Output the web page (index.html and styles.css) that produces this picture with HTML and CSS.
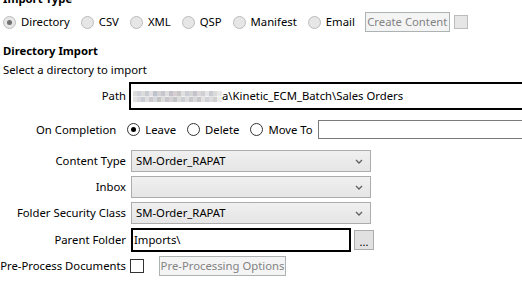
FILE: index.html
```html
<!DOCTYPE html>
<html>
<head>
<meta charset="utf-8">
<link rel="stylesheet" href="styles.css">
</head>
<body>
<div class="page">
  <div class="heading heading-top">Import Type</div>
  <div class="type-row">
    <span class="opt"><span class="radio radio-disabled checked"></span>Directory</span>
    <span class="opt"><span class="radio radio-disabled"></span>CSV</span>
    <span class="opt"><span class="radio radio-disabled"></span>XML</span>
    <span class="opt"><span class="radio radio-disabled"></span>QSP</span>
    <span class="opt"><span class="radio radio-disabled"></span>Manifest</span>
    <span class="opt"><span class="radio radio-disabled"></span>Email</span>
    <span class="btn btn-disabled create">Create Content</span>
    <span class="check check-disabled"></span>
  </div>
  <div class="heading section">Directory Import</div>
  <div class="hint">Select a directory to import</div>

  <div class="field path-row">
    <span class="label">Path</span>
    <div class="textbox path-box"><span class="blur"></span>a\Kinetic_ECM_Batch\Sales Orders</div>
  </div>

  <div class="completion-row">
    <span class="completion-label">On Completion</span>
    <span class="opt"><span class="radio checked"></span>Leave</span>
    <span class="opt"><span class="radio"></span>Delete</span>
    <span class="opt opt-last"><span class="radio"></span>Move To</span>
    <div class="textbox move-box"></div>
  </div>

  <div class="field combo-row first-combo">
    <span class="label">Content Type</span>
    <div class="combo"><span>SM-Order_RAPAT</span><svg class="chev" width="8" height="5" viewBox="0 0 8 5"><path d="M1 1 L4 4 L7 1" fill="none" stroke="#606060" stroke-width="1.3"/></svg></div>
  </div>
  <div class="field combo-row">
    <span class="label">Inbox</span>
    <div class="combo"><span></span><svg class="chev" width="8" height="5" viewBox="0 0 8 5"><path d="M1 1 L4 4 L7 1" fill="none" stroke="#606060" stroke-width="1.3"/></svg></div>
  </div>
  <div class="field combo-row">
    <span class="label">Folder Security Class</span>
    <div class="combo"><span>SM-Order_RAPAT</span><svg class="chev" width="8" height="5" viewBox="0 0 8 5"><path d="M1 1 L4 4 L7 1" fill="none" stroke="#606060" stroke-width="1.3"/></svg></div>
  </div>

  <div class="field parent-row">
    <span class="label">Parent Folder</span>
    <div class="textbox parent-box">Imports\</div>
    <span class="btn browse">...</span>
  </div>

  <div class="field pre-row">
    <span class="label pre-label">Pre-Process Documents</span>
    <span class="check"></span>
    <span class="btn btn-disabled pre-btn">Pre-Processing Options</span>
  </div>
</div>
</body>
</html>
```
FILE: styles.css
```css
html, body {
  margin: 0;
  background: #fff;
  overflow: hidden;
}
body {
  font-family: "Noto Sans", "Open Sans", sans-serif;
  font-size: 11.3px;
  line-height: 16px;
  color: #000;
}
.page {
  width: 522px;
  height: 290px;
  overflow: hidden;
}
.heading {
  font-weight: bold;
  padding-left: 3px;
}
.heading-top {
  margin-top: -9px;
}
.type-row {
  display: flex;
  align-items: center;
  height: 20px;
  margin-top: 5px;
  padding-left: 3px;
}
.opt {
  display: flex;
  align-items: center;
  gap: 5px;
  margin-right: 11px;
  white-space: nowrap;
}
.radio {
  width: 13px;
  height: 13px;
  box-sizing: border-box;
  border-radius: 50%;
  border: 1px solid #333;
  background: #fff;
  display: flex;
  align-items: center;
  justify-content: center;
  flex: none;
}
.radio.checked::after {
  content: "";
  width: 5px;
  height: 5px;
  border-radius: 50%;
  background: #000;
}
.radio-disabled {
  background: #e6e6e6;
  border-color: #bcbcbc;
}
.radio-disabled.checked::after {
  background: #707070;
}
.btn {
  box-sizing: border-box;
  display: flex;
  align-items: center;
  justify-content: center;
  border: 1px solid #adadad;
  background: #e1e1e1;
  white-space: nowrap;
  flex: none;
}
.btn-disabled {
  background: #f4f4f4;
  border-color: #adb2b5;
  color: #838383;
}
.create {
  width: 85px;
  height: 20px;
  margin-left: -1px;
}
.check {
  box-sizing: border-box;
  width: 14px;
  height: 14px;
  border: 1px solid #333;
  background: #fff;
  flex: none;
}
.check-disabled {
  background: #e6e6e6;
  border-color: #bcbcbc;
  margin-left: 4px;
}
.section {
  margin-top: 11px;
}
.hint {
  margin-top: 3px;
  padding-left: 3px;
}
.field {
  display: flex;
  align-items: center;
}
.label {
  width: 126px;
  display: flex;
  justify-content: flex-end;
  flex: none;
  white-space: nowrap;
}
.textbox {
  box-sizing: border-box;
  background: #fff;
  display: flex;
  align-items: center;
  white-space: nowrap;
  flex: none;
}
.path-row {
  margin-top: 4px;
}
.path-box {
  margin-left: 3px;
  width: 420px;
  height: 28px;
  border: 2px solid #000;
  padding-left: 2px;
}
.blur {
  display: inline-block;
  width: 89px;
  height: 11px;
  margin-top: 1px;
  flex: none;
  background:
    linear-gradient(90deg, #dcdcdc 0 4px, #cfd2d8 4px 8px, #dcdcdc 8px 12px, #c9ccd2 12px 16px, #e2e0e2 16px 20px, #bfc4cc 20px 24px, #d6d3d6 24px 28px, #c6c6cc 28px 32px, #dedede 32px 36px, #c2c2c8 36px 40px, #d8cfd2 40px 44px, #c7c7c7 44px 48px, #e0e0e0 48px 52px, #cacdd4 52px 56px, #d5d5d5 56px 60px, #c4c4ca 60px 64px, #dcd8da 64px 68px, #cfcfd4 68px 72px, #e4e4e4 72px 76px, #c8cbd0 76px 80px, #dadada 80px 84px, #e8e8e8 84px 89px) top / 100% 50% no-repeat,
    linear-gradient(90deg, #e2e2e2 0 4px, #d8d8dc 4px 8px, #c8ccd2 8px 12px, #dfdfdf 12px 16px, #cdc8cc 16px 20px, #d6d9de 20px 24px, #c4c4c4 24px 28px, #dcdcdc 28px 32px, #c8c6cc 32px 36px, #d6d2d4 36px 40px, #c2c4c8 40px 44px, #dcdcdc 44px 48px, #cbced2 48px 52px, #e0dddf 52px 56px, #c8c8cc 56px 60px, #d9d9d9 60px 64px, #c9c6ca 64px 68px, #e2e2e2 68px 72px, #cfd1d6 72px 76px, #dcdcdc 76px 80px, #d0d0d0 80px 84px, #ebebeb 84px 89px) bottom / 100% 50% no-repeat;
}
.completion-row {
  display: flex;
  align-items: center;
  margin-top: 10px;
  height: 19px;
  padding-left: 36px;
}
.completion-label {
  margin-right: 11px;
  white-space: nowrap;
}
.opt-last {
  margin-right: 5px;
}
.move-box {
  width: 300px;
  height: 19px;
  border: 1px solid #7a7a7a;
}
.combo-row {
  margin-top: 4px;
}
.first-combo {
  margin-top: 11px;
}
.combo {
  box-sizing: border-box;
  margin-left: 5px;
  width: 240px;
  height: 22px;
  border: 1px solid #acacac;
  background: linear-gradient(#f0f0f0, #e5e5e5);
  display: flex;
  align-items: center;
  justify-content: space-between;
  padding: 0 7px 0 4px;
  white-space: nowrap;
  flex: none;
}
.chev {
  flex: none;
}
.parent-row {
  margin-top: 4px;
}
.parent-box {
  margin-left: 5px;
  width: 220px;
  height: 24px;
  border: 2px solid #000;
  padding-left: 1px;
}
.browse {
  margin-left: 3px;
  width: 20px;
  height: 20px;
  font-size: 11px;
  line-height: 10px;
  padding-top: 4px;
}
.pre-row {
  margin-top: 4px;
  height: 20px;
}
.pre-label {
  width: 124px;
  margin-left: 2px;
}
.pre-row .check {
  margin-left: 4px;
}
.pre-btn {
  margin-left: 15px;
  width: 127px;
  height: 20px;
}
```
